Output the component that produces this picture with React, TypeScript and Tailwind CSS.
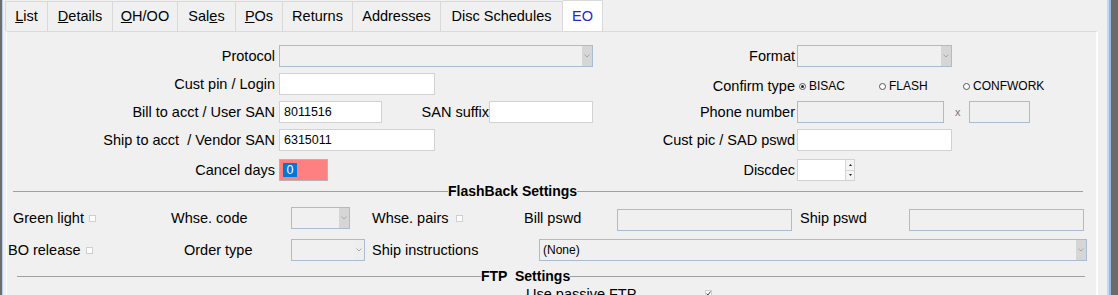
import type { ReactNode } from 'react'

type Tab = { key: string; cls: string; label: ReactNode; active?: boolean }

const tabs: Tab[] = [
  { key: 'list', cls: 'w-[43px] border-l', label: <><u>L</u>ist</> },
  { key: 'details', cls: 'w-[65px]', label: <><u>D</u>etails</> },
  { key: 'ohoo', cls: 'w-[65px]', label: <><u>O</u>H/OO</> },
  { key: 'sales', cls: 'w-[58px]', label: <>Sal<u>e</u>s</> },
  { key: 'pos', cls: 'w-[47px]', label: <><u>P</u>Os</> },
  { key: 'returns', cls: 'w-[70px]', label: 'Returns' },
  { key: 'addresses', cls: 'w-[88px]', label: 'Addresses' },
  { key: 'disc', cls: 'w-[122px]', label: 'Disc Schedules' },
  { key: 'eo', cls: 'w-[40px]', label: 'EO', active: true },
]

const Chevron = () => (
  <svg width="6" height="4" viewBox="0 0 6 4">
    <path d="M0.5 0.5 L3 3 L5.5 0.5" stroke="#a8a8a8" fill="none" strokeWidth="1" />
  </svg>
)

const Combo = ({ w, text, btn = 'bg-[#d6d6d6]' }: { w: string; text?: string; btn?: string }) => (
  <div className={`${w} flex h-[22px] border border-[#abbbd2] bg-[#f0f0f0]`}>
    <span className="flex flex-1 items-center pl-[3px] text-[12px] leading-none">{text}</span>
    <span className={`${btn} flex w-[10px] items-center justify-center`}>
      <Chevron />
    </span>
  </div>
)

const TextBox = ({ w, value, disabled }: { w: string; value?: string; disabled?: boolean }) => (
  <div
    className={`${w} flex h-[22px] items-center border pl-[4px] text-[12.5px] leading-none ${
      disabled ? 'border-[#abbbd2] bg-[#f0f0f0]' : 'border-[#d2d2d2] bg-white'
    }`}
  >
    {value}
  </div>
)

const Check = ({ checked }: { checked?: boolean }) => (
  <span className="flex h-[7px] w-[7px] items-center justify-center border border-[#cfcfcf] bg-white">
    {checked && (
      <svg width="5" height="5" viewBox="0 0 5 5">
        <path d="M0.5 2.5 L2 4 L4.5 0.5" stroke="#333" fill="none" strokeWidth="0.9" />
      </svg>
    )}
  </span>
)

const Radio = ({ on }: { on?: boolean }) => (
  <span className="flex h-[7px] w-[7px] items-center justify-center rounded-full border border-[#555] bg-white">
    {on && <span className="h-[3px] w-[3px] rounded-full bg-[#222]" />}
  </span>
)

const Section = ({ title, lead, className }: { title: string; lead: string; className: string }) => (
  <div className={`${className} flex h-[16px] items-center`}>
    <span className={`${lead} h-px bg-[#a0a0a0]`} />
    <span className="whitespace-pre text-[14px] font-bold leading-none">{title}</span>
    <span className="h-px flex-1 bg-[#a0a0a0]" />
  </div>
)

export default function App() {
  return (
    <div className="flex h-[295px] w-[1118px] overflow-hidden bg-[#f0f0f0] font-['Liberation_Sans',Arial,sans-serif] text-black">
      <div className="w-[2px] bg-[#6d6d6d]" />
      <div className="w-px bg-[#b9d1ee]" />

      <div className="flex w-[1104px] flex-col">
        {/* Tabs */}
        <div className="ml-[2px] flex h-[31px] items-end">
          {tabs.map((t) => (
            <div
              key={t.key}
              className={`${t.cls} flex items-center justify-center border-t border-r border-[#d9d9d9] text-[14.5px] leading-none ${
                t.active ? 'h-[31px] bg-white text-[#2626d0]' : 'h-[30px] bg-[#f0f0f0]'
              }`}
            >
              {t.label}
            </div>
          ))}
        </div>

        {/* Panel */}
        <div className="ml-[3px] w-[1092px] flex-1 border-t border-r-2 border-l border-t-[#dadada] border-r-[#fdfdfd] border-l-[#fafafa] pt-[13px] text-[14.5px] leading-none">
          <div className="flex flex-col gap-[6px]">
            <div className="flex h-[22px] items-center">
              <div className="flex w-[590px] items-center">
                <span className="w-[272px] pr-[4px] text-right">Protocol</span>
                <Combo w="w-[314px]" />
              </div>
              <span className="w-[200px] pr-[2px] text-right">Format</span>
              <Combo w="w-[155px]" />
            </div>

            <div className="flex h-[22px] items-center">
              <div className="flex w-[590px] items-center">
                <span className="w-[272px] pr-[4px] text-right">Cust pin / Login</span>
                <TextBox w="w-[156px]" />
              </div>
              <span className="mt-[4px] w-[200px] pr-[2px] text-right">Confirm type</span>
              <div className="mt-[4px] ml-[2px] flex items-center text-[12px]">
                <span className="flex w-[80px] items-center gap-[3px]">
                  <Radio on />
                  BISAC
                </span>
                <span className="flex w-[84px] items-center gap-[3px]">
                  <Radio />
                  FLASH
                </span>
                <span className="flex items-center gap-[3px]">
                  <Radio />
                  CONFWORK
                </span>
              </div>
            </div>

            <div className="flex h-[22px] items-center">
              <div className="flex w-[590px] items-center">
                <span className="w-[272px] pr-[4px] text-right">Bill to acct / User SAN</span>
                <TextBox w="w-[103px]" value="8011516" />
                <span className="w-[107px] text-right">SAN suffix</span>
                <TextBox w="w-[104px]" />
              </div>
              <span className="w-[200px] pr-[2px] text-right">Phone number</span>
              <TextBox w="w-[147px]" disabled />
              <span className="w-[25px] pl-[11px] text-[11px] text-[#777]">x</span>
              <TextBox w="w-[61px]" disabled />
            </div>

            <div className="flex h-[22px] items-center">
              <div className="flex w-[590px] items-center">
                <span className="w-[272px] pr-[4px] text-right">Ship to acct&nbsp; / Vendor SAN</span>
                <TextBox w="w-[156px]" value="6315011" />
              </div>
              <span className="w-[200px] pr-[2px] text-right">Cust pic / SAD pswd</span>
              <TextBox w="w-[155px]" />
            </div>

            <div className="mt-[2px] flex h-[22px] items-center">
              <div className="flex w-[590px] items-center">
                <span className="w-[272px] pr-[4px] text-right">Cancel days</span>
                <div className="flex h-[22px] w-[49px] items-center border border-[#b4b4b4] bg-[#ff8080] pl-[3px]">
                  <span className="flex h-[14px] w-[14px] items-center justify-center bg-[#0078d7] text-[12.5px] text-white">
                    0
                  </span>
                </div>
              </div>
              <span className="w-[200px] pr-[2px] text-right">Discdec</span>
              <div className="flex h-[22px] w-[58px] border border-[#d2d2d2] bg-white">
                <span className="flex-1" />
                <span className="flex w-[9px] flex-col border-l border-[#d6d6d6]">
                  <span className="flex flex-1 items-center justify-center border-b border-[#d6d6d6] bg-[#f4f4f4]">
                    <svg width="3" height="2" viewBox="0 0 3 2">
                      <path d="M1.5 0 L3 2 L0 2 Z" fill="#222" />
                    </svg>
                  </span>
                  <span className="flex flex-1 items-center justify-center bg-[#f4f4f4]">
                    <svg width="3" height="2" viewBox="0 0 3 2">
                      <path d="M0 0 L3 0 L1.5 2 Z" fill="#222" />
                    </svg>
                  </span>
                </span>
              </div>
            </div>
          </div>

          {/* FlashBack */}
          <Section className="mt-[2px] mr-[13px] ml-[6px]" lead="w-[435px]" title="FlashBack Settings" />

          <div className="mt-[8px] flex h-[22px] items-center">
            <span className="w-[82px] pl-[6px]">Green light</span>
            <Check />
            <span className="w-[75px]" />
            <span className="w-[120px]">Whse. code</span>
            <Combo w="w-[59px]" />
            <span className="ml-[22px] w-[84px]">Whse. pairs</span>
            <Check />
            <span className="w-[61px]" />
            <span className="w-[93px]">Bill pswd</span>
            <div className="mt-[4px]">
              <TextBox w="w-[175px]" disabled />
            </div>
            <span className="ml-[8px] w-[109px]">Ship pswd</span>
            <div className="mt-[4px]">
              <TextBox w="w-[175px]" disabled />
            </div>
          </div>

          <div className="mt-[10px] flex h-[22px] items-center">
            <span className="w-[79px] pl-px">BO release</span>
            <Check />
            <span className="w-[91px]" />
            <span className="w-[107px]">Order type</span>
            <Combo w="w-[74px]" btn="bg-[#eeeeee]" />
            <span className="ml-[7px] w-[167px]">Ship instructions</span>
            <Combo w="w-[548px]" text="(None)" />
          </div>

          {/* FTP */}
          <Section className="mt-[7px] mr-[11px] ml-[10px]" lead="w-[464px]" title="FTP  Settings" />

          <div className="mt-[3px] flex h-[16px] items-start">
            <span className="ml-[519px] w-[179px]">Use passive FTP</span>
            <span className="mt-[3px]">
              <Check checked />
            </span>
          </div>
        </div>
      </div>

      <div className="w-[2px] bg-[#c4daf4]" />
      <div className="w-[2px] bg-[#93b8e6]" />
      <div className="flex-1 bg-[#6b6b6b]" />
    </div>
  )
}
